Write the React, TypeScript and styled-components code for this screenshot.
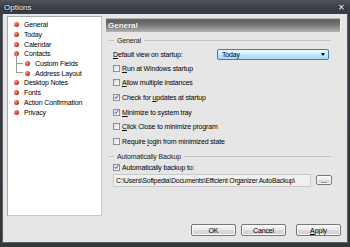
import React, { FunctionComponent } from 'react';
import styled, { createGlobalStyle } from 'styled-components';

const GlobalStyle = createGlobalStyle`
    html, body {
        margin: 0;
        padding: 0;
        background: #2e3237;
    }

    body {
        font-family: 'Liberation Sans', Arial, sans-serif;
        font-size: 7px;
        letter-spacing: -0.15px;
        color: #000;
    }
`;

const StyledWindow = styled.div`
    width: 350px;
    height: 247px;
    box-sizing: border-box;
    display: flex;
    flex-direction: column;
    background: linear-gradient(#50555c, #3a3e44 8px, #33373c);
    padding: 0 2px 4px 2px;
`;

const StyledTitleBar = styled.div`
    height: 14px;
    display: flex;
    align-items: center;
    padding: 0 3px 0 2px;
    color: #f4f4f4;
    font-size: 8px;
    letter-spacing: 0;
    text-shadow: 0 0 2px #000;
`;

const StyledTitle = styled.span`
    flex: 1;
`;

const StyledClose = styled.span`
    font-size: 8px;
    font-weight: bold;
    color: #d8dde2;
`;

const StyledBody = styled.div`
    flex: 1;
    display: flex;
    flex-direction: column;
    background: #e6e6e6;
    border: 1px solid #5c6066;
    border-top: none;
    padding: 2px 6px 0 4px;
`;

const StyledContent = styled.div`
    display: flex;
    height: 200px;
    gap: 4px;
`;

const StyledSidebar = styled.div`
    width: 95px;
    box-sizing: border-box;
    background: #fff;
    border: 1px solid #a9a9a9;
    border-right-color: #c8c8c8;
    border-bottom-color: #c8c8c8;
    padding: 3px 0 0 5px;
`;

const StyledTreeItem = styled.div<{ $child?: boolean }>`
    position: relative;
    display: flex;
    align-items: center;
    height: 9.7px;
    padding-left: ${({ $child }) => ($child ? '12px' : '1px')};
    gap: 5px;
    white-space: nowrap;
`;

const StyledBullet = styled.span`
    width: 5px;
    height: 5px;
    border-radius: 50%;
    flex: none;
    background: radial-gradient(circle at 35% 35%, #f5a58f, #d9381c 55%, #9c2410);
`;

const StyledBranch = styled.span`
    position: absolute;
    left: 3px;
    top: -5px;
    height: 10px;
    width: 7px;
    border-left: 1px solid #9a9a9a;
    border-bottom: 1px solid #9a9a9a;
    box-sizing: border-box;
`;

const StyledMain = styled.div`
    flex: 1;
    display: flex;
    flex-direction: column;
`;

const StyledHeader = styled.div`
    height: 14px;
    margin-top: 2px;
    display: flex;
    align-items: center;
    padding-left: 2px;
    color: #fff;
    font-size: 8px;
    font-weight: bold;
    letter-spacing: 0;
    text-shadow: 0 0 1px #333;
    background: linear-gradient(#d8d8d8 0, #5e5e5e 12%, #727272 45%, #9a9a9a 80%, #b4b4b4 100%);
    border-right: 1px solid #f4f4f4;
`;

const StyledGroupTitle = styled.div`
    display: flex;
    align-items: center;
    gap: 3px;
    height: 10px;
    margin: 3px 10px 0 2px;
    color: #222;

    &::before {
        content: '';
        width: 6px;
        border-top: 1px solid #c4c4c4;
    }

    &::after {
        content: '';
        flex: 1;
        border-top: 1px solid #c4c4c4;
    }
`;

const StyledFieldRow = styled.div`
    display: flex;
    align-items: center;
    height: 14px;
    padding-left: 7px;
    margin-top: 2px;
`;

const StyledLabel = styled.span`
    width: 104px;
`;

const StyledSelect = styled.div`
    width: 112px;
    height: 11px;
    box-sizing: border-box;
    display: flex;
    align-items: center;
    border: 1px solid #3c7fb1;
    border-radius: 2px;
    background: linear-gradient(#eaf6fd 0, #d9f0fc 45%, #bee6fd 50%, #a7d9f5 100%);
    padding-left: 4px;
`;

const StyledSelectValue = styled.span`
    flex: 1;
`;

const StyledArrow = styled.span`
    width: 0;
    height: 0;
    margin-right: 3px;
    border-left: 2.5px solid transparent;
    border-right: 2.5px solid transparent;
    border-top: 3px solid #000;
`;

const StyledCheckRow = styled.div<{ $short?: boolean }>`
    display: flex;
    align-items: center;
    gap: 2px;
    height: ${({ $short }) => ($short ? '11px' : '14.6px')};
    padding-left: 7px;
`;

const StyledBox = styled.span`
    width: 7px;
    height: 7px;
    box-sizing: border-box;
    border: 1px solid #8e8f8f;
    background: linear-gradient(135deg, #dcdcdc, #fff);
    display: flex;
    align-items: center;
    justify-content: center;
    flex: none;
`;

const StyledPathRow = styled.div`
    display: flex;
    align-items: center;
    gap: 5px;
    padding-left: 7px;
    margin-top: 1px;
`;

const StyledPath = styled.div`
    width: 198px;
    height: 13px;
    box-sizing: border-box;
    display: flex;
    align-items: center;
    padding-left: 2px;
    background: #f0f0f0;
    border: 1px solid #c9c9c9;
    font-size: 6.8px;
    letter-spacing: -0.2px;
    white-space: nowrap;
    overflow: hidden;
`;

const StyledButton = styled.div<{ $small?: boolean; $spaced?: boolean }>`
    width: ${({ $small }) => ($small ? '16px' : '45px')};
    height: ${({ $small }) => ($small ? '10px' : '12px')};
    margin-left: ${({ $spaced }) => ($spaced ? '5px' : '0')};
    box-sizing: border-box;
    display: flex;
    align-items: center;
    justify-content: center;
    border: 1px solid #777;
    border-radius: 2px;
    background: linear-gradient(#f4f4f4 0, #ebebeb 50%, #dcdcdc 51%, #cfcfcf 100%);
    box-shadow: inset 0 0 0 1px #fafafa;
    font-size: 7px;
`;

const StyledButtonBar = styled.div`
    display: flex;
    justify-content: flex-end;
    gap: 5px;
    margin-top: 8px;
`;

const Check: FunctionComponent<{ checked?: boolean }> = ({ checked }) => (
    <StyledBox>
        {checked && (
            <svg width='6' height='6' viewBox='0 0 6 6'>
                <path d='M1 3.2 L2.3 4.8 L5 1' fill='none' stroke='#2a46b8' strokeWidth='1.1' />
            </svg>
        )}
    </StyledBox>
);

const treeItems = [
    { label: 'General' },
    { label: 'Today' },
    { label: 'Calendar' },
    { label: 'Contacts' },
    { label: 'Custom Fields', child: true },
    { label: 'Address Layout', child: true },
    { label: 'Desktop Notes' },
    { label: 'Fonts' },
    { label: 'Action Confirmation' },
    { label: 'Privacy' }
];

const options = [
    { key: 'R', rest: 'un at Windows startup', checked: false },
    { key: 'A', rest: 'llow multiple instances', checked: false },
    { pre: 'Check for ', key: 'u', rest: 'pdates at startup', checked: true },
    { key: 'M', rest: 'inimize to system tray', checked: true },
    { key: 'C', rest: 'lick Close to minimize program', checked: false },
    { pre: 'Require ', key: 'l', rest: 'ogin from minimized state', checked: false }
];

const App: FunctionComponent = () => (
    <>
        <GlobalStyle />
        <StyledWindow>
            <StyledTitleBar>
                <StyledTitle>Options</StyledTitle>
                <StyledClose>✕</StyledClose>
            </StyledTitleBar>
            <StyledBody>
                <StyledContent>
                    <StyledSidebar>
                        {treeItems.map((item) => (
                            <StyledTreeItem key={item.label} $child={item.child}>
                                {item.child && <StyledBranch />}
                                <StyledBullet />
                                {item.label}
                            </StyledTreeItem>
                        ))}
                    </StyledSidebar>
                    <StyledMain>
                        <StyledHeader>General</StyledHeader>
                        <StyledGroupTitle>General</StyledGroupTitle>
                        <StyledFieldRow>
                            <StyledLabel>
                                <u>D</u>efault view on startup:
                            </StyledLabel>
                            <StyledSelect>
                                <StyledSelectValue>Today</StyledSelectValue>
                                <StyledArrow />
                            </StyledSelect>
                        </StyledFieldRow>
                        {options.map((opt) => (
                            <StyledCheckRow key={opt.rest}>
                                <Check checked={opt.checked} />
                                <span>
                                    {opt.pre}
                                    <u>{opt.key}</u>
                                    {opt.rest}
                                </span>
                            </StyledCheckRow>
                        ))}
                        <StyledGroupTitle>Automatically Backup</StyledGroupTitle>
                        <StyledCheckRow $short>
                            <Check checked />
                            <span>Automatically backup to:</span>
                        </StyledCheckRow>
                        <StyledPathRow>
                            <StyledPath>
                                C:\Users\Softpedia\Documents\Efficient Organizer AutoBackup\
                            </StyledPath>
                            <StyledButton $small>...</StyledButton>
                        </StyledPathRow>
                    </StyledMain>
                </StyledContent>
                <StyledButtonBar>
                    <StyledButton>OK</StyledButton>
                    <StyledButton>Cancel</StyledButton>
                    <StyledButton $spaced>
                        <span>
                            <u>A</u>pply
                        </span>
                    </StyledButton>
                </StyledButtonBar>
            </StyledBody>
        </StyledWindow>
    </>
);

export default App;
